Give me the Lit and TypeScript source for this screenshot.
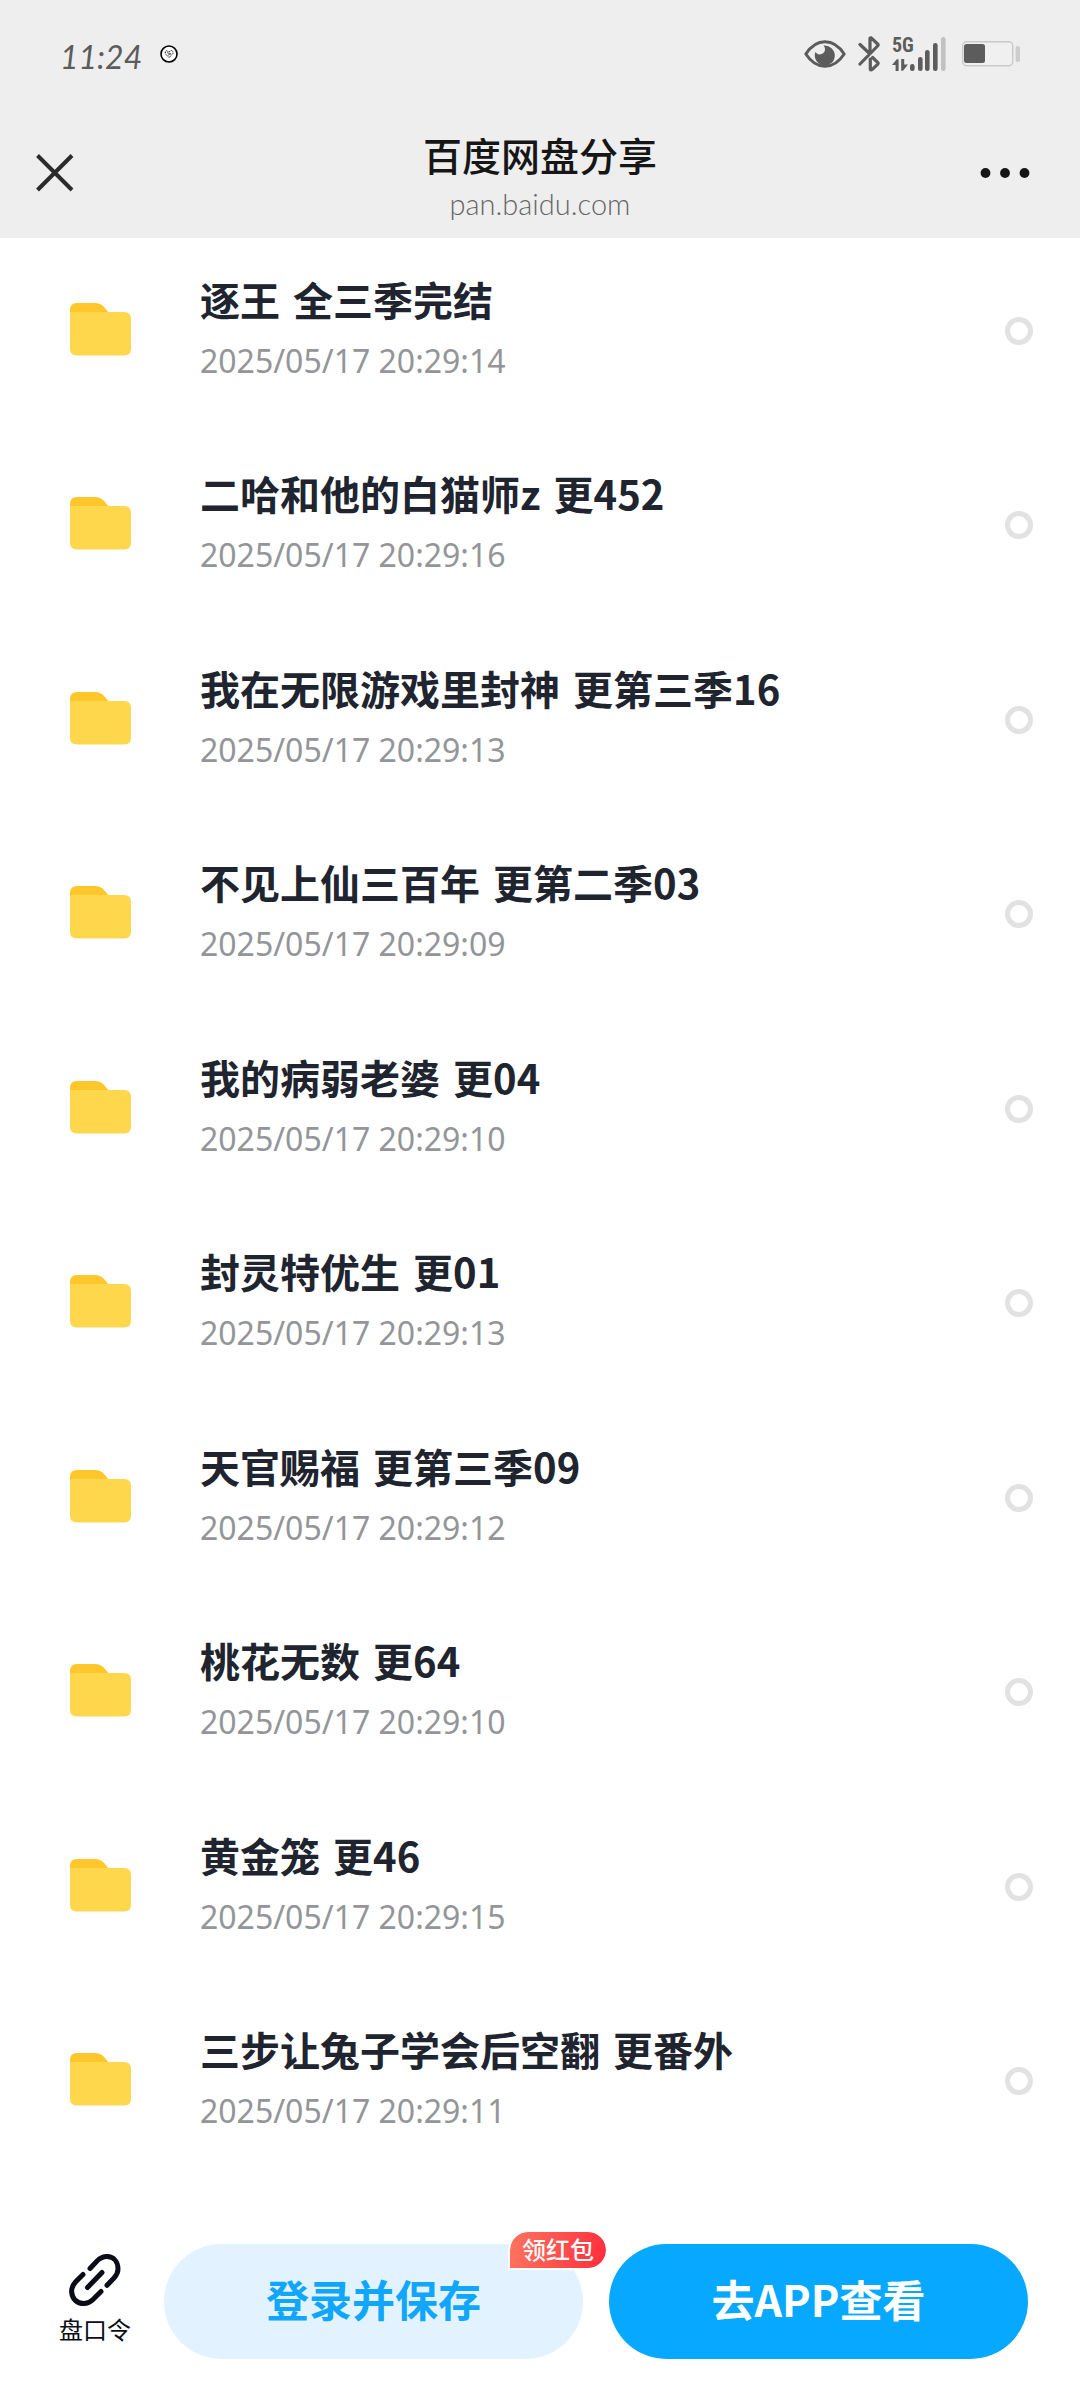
import { LitElement, html, css, svg } from "lit";
import { customElement, property } from "lit/decorators.js";

interface Folder {
  name: string;
  status: string;
  date: string;
}

const folders: Folder[] = [
  { name: "逐王", status: "全三季完结", date: "2025/05/17 20:29:14" },
  { name: "二哈和他的白猫师z", status: "更452", date: "2025/05/17 20:29:16" },
  { name: "我在无限游戏里封神", status: "更第三季16", date: "2025/05/17 20:29:13" },
  { name: "不见上仙三百年", status: "更第二季03", date: "2025/05/17 20:29:09" },
  { name: "我的病弱老婆", status: "更04", date: "2025/05/17 20:29:10" },
  { name: "封灵特优生", status: "更01", date: "2025/05/17 20:29:13" },
  { name: "天官赐福", status: "更第三季09", date: "2025/05/17 20:29:12" },
  { name: "桃花无数", status: "更64", date: "2025/05/17 20:29:10" },
  { name: "黄金笼", status: "更46", date: "2025/05/17 20:29:15" },
  { name: "三步让兔子学会后空翻", status: "更番外", date: "2025/05/17 20:29:11" },
];

@customElement("status-bar")
class StatusBar extends LitElement {
  static styles = css`
    :host {
      display: flex;
      align-items: center;
      justify-content: space-between;
      height: 108px;
      padding: 0 60px;
      color: #5c5c5c;
    }
    .left,
    .right {
      display: flex;
      align-items: center;
    }
    .left {
      gap: 18px;
    }
    .right {
      gap: 12px;
    }
    .time {
      font: italic 400 32px/40px Lato, "Noto Sans", sans-serif;
      padding-top: 6px;
    }
    .network {
      display: flex;
      align-items: flex-end;
      margin-right: 4px;
    }
    .carrier {
      display: flex;
      flex-direction: column;
      align-items: flex-start;
      gap: 6px;
      width: 18px;
    }
    .gen {
      font: 700 20px/16px "Liberation Sans Narrow", "Roboto Condensed", "Liberation Sans", sans-serif;
    }
    svg {
      display: block;
    }
  `;

  render() {
    return html`
      <div class="left">
        <span class="time">11:24</span>
        <svg width="18" height="18" viewBox="0 0 18 18" aria-hidden="true">
          <circle cx="9" cy="9" r="8" fill="#fff" stroke="#000" stroke-width="1.6" />
          <path d="M9 12.6 5.3 8.8V6.6L6.6 5.6 9 7l2.4-1.6 1.5 1.2v2z" fill="none" stroke="#222" stroke-width="1" stroke-dasharray="1.4 .6" />
          <path d="M7 7.6l4 1.6M8 10.4l3-2" stroke="#333" stroke-width=".8" />
        </svg>
      </div>
      <div class="right">
        <svg width="42" height="28" viewBox="0 0 42 28" aria-hidden="true">
          <path d="M1.8 14C7 6 14 1.7 21 1.7S35 6 40.2 14C35 22 28 26.3 21 26.3S7 22 1.8 14z" fill="none" stroke="#5c5c5c" stroke-width="3" stroke-linejoin="round" />
          <path d="M19.5 5.6A10 10 0 1 1 11.4 12 5.2 5.2 0 1 0 19.5 5.6z" fill="#5c5c5c" />
          <circle cx="21" cy="21" r="5" fill="#5c5c5c" />
        </svg>
        <svg width="22" height="36" viewBox="0 0 22 36" aria-hidden="true">
          <path d="M2 8.5 11.5 17.500M2 28 19.600 10q1-1 0-2L14 2.600Q12.600 1.400 12 2.200V17.500M12.300 23v10.300q.5 1.200 2 0l5.300-5q1-1 0-2l-5-4.800" fill="none" stroke="#5c5c5c" stroke-width="3.2" stroke-linecap="round" stroke-linejoin="round" />
        </svg>
        <div class="network">
          <div class="carrier">
            <span class="gen">5G</span>
            <svg width="16" height="12" viewBox="0 0 16 12" aria-hidden="true">
              <path d="M6.6 12H3.6V6H0L4.8.2h1.8zM9.200 0h3v5.600H16L11 11.800H9.200z" fill="#5c5c5c" />
            </svg>
          </div>
          <svg width="36" height="34" viewBox="0 0 36 34" aria-hidden="true">
            ${[
              [0, 27],
              [8, 20],
              [15, 13],
              [23, 6],
              [31, 0],
            ].map(
              ([x, y], i) => svg`<rect x=${x} y=${y} width="4.6" height=${34 - y} rx="2.2" fill=${i === 4 ? "#c1c1c1" : "#5c5c5c"} />`
            )}
          </svg>
        </div>
        <svg width="58" height="26" viewBox="0 0 58 26" aria-hidden="true">
          <rect x=".7" y=".7" width="50" height="24" rx="4" fill="#f0f0f0" stroke="#c9c9c9" stroke-width="1.4" />
          <rect x="2" y="3" width="21" height="19" rx="2.5" fill="#5c5c5c" />
          <rect x="53.6" y="5" width="4.4" height="16" rx="2" fill="#cdcdcd" />
        </svg>
      </div>
    `;
  }
}

@customElement("page-nav")
class PageNav extends LitElement {
  static styles = css`
    :host {
      display: grid;
      grid-template-columns: 120px 1fr 120px;
      height: 130px;
      color: #161616;
    }
    button {
      display: flex;
      align-items: center;
      height: 130px;
      border: 0;
      padding: 0;
      background: none;
      cursor: pointer;
    }
    .close {
      padding-left: 36px;
    }
    .more {
      justify-content: flex-end;
      padding-right: 50px;
    }
    .heading {
      display: flex;
      flex-direction: column;
      align-items: center;
      padding-top: 20px;
    }
    .title {
      margin: 0;
      font: 500 39px/52px "Noto Sans CJK SC", sans-serif;
    }
    .host {
      font: 300 29px/48px Lato, "Noto Sans", sans-serif;
      color: #666;
    }
  `;

  render() {
    return html`
      <button class="close" aria-label="关闭">
        <svg width="38" height="38" viewBox="0 0 38 38"><path d="M1.5 1.5l34.5 34.5M36 1.5L1.5 36" stroke="#2b2b2b" stroke-width="4" /></svg>
      </button>
      <div class="heading">
        <h1 class="title">百度网盘分享</h1>
        <span class="host">pan.baidu.com</span>
      </div>
      <button class="more" aria-label="更多">
        <svg width="50" height="10" viewBox="0 0 50 10" fill="#161616"><circle cx="5.5" cy="5" r="4.9" /><circle cx="25" cy="5" r="4.9" /><circle cx="44.5" cy="5" r="4.9" /></svg>
      </button>
    `;
  }
}

@customElement("folder-row")
class FolderRow extends LitElement {
  @property({ attribute: false }) folder!: Folder;

  static styles = css`
    :host {
      display: flex;
      align-items: center;
      height: 120px;
      padding: 0 47px 0 70px;
    }
    .icon {
      flex: none;
      margin-right: 69px;
    }
    .text {
      flex: 1;
      min-width: 0;
      display: flex;
      flex-direction: column;
      gap: 4px;
    }
    .name {
      font: 700 40px/56px "Noto Sans CJK SC", sans-serif;
      color: #20242f;
      text-decoration: none;
      white-space: nowrap;
    }
    .status {
      margin-left: 4px;
    }
    .date {
      font: 400 32px/60px "Noto Sans", sans-serif;
      color: #939599;
    }
    .pick {
      appearance: none;
      box-sizing: border-box;
      flex: none;
      width: 28px;
      height: 28px;
      margin: 0;
      border: 5px solid #e2e2e2;
      border-radius: 50%;
      background: #fff;
    }
    .pick:checked {
      border-color: #09aaff;
    }
  `;

  render() {
    const { name, status, date } = this.folder;
    return html`
      <svg class="icon" width="61" height="56" viewBox="0 0 61 56" aria-hidden="true">
        <path d="M0 20V7Q0 0 7 0H25Q31 0 34.5 4.5L40 11V20z" fill="#ffc72b" />
        <path d="M0 9H54Q61 9 61 16V45.500Q61 52.500 54 52.500H7Q0 52.500 0 45.500z" fill="#ffd74d" />
      </svg>
      <div class="text">
        <a class="name" id="name" href="#">${name} <span class="status">${status}</span></a>
        <time class="date">${date}</time>
      </div>
      <input class="pick" type="checkbox" aria-labelledby="name" />
    `;
  }
}

@customElement("action-bar")
class ActionBar extends LitElement {
  static styles = css`
    :host {
      box-sizing: border-box;
      display: flex;
      align-items: flex-start;
      height: 210px;
      padding: 66px 52px 0 59px;
      font-family: "Noto Sans CJK SC", sans-serif;
    }
    button {
      border: 0;
      padding: 0;
      font-family: inherit;
      cursor: pointer;
    }
    .code {
      display: flex;
      flex-direction: column;
      align-items: center;
      gap: 6px;
      margin: 10px 33px 0 0;
      background: none;
      color: #0a0c18;
      font-size: 24px;
      line-height: 34px;
    }
    .actions {
      flex: 1;
      display: grid;
      grid-template-columns: 1fr 1fr;
      gap: 26px;
    }
    .action {
      position: relative;
      height: 115px;
      padding-bottom: 8px;
      border-radius: 58px;
      font-size: 43px;
      font-weight: 700;
      line-height: 60px;
    }
    .save {
      background: #e2f3ff;
      color: #10a6fb;
    }
    .open {
      background: #07a8ff;
      color: #fff;
    }
    .badge {
      position: absolute;
      top: -14px;
      right: -25px;
      padding: 0 12px 2px;
      border: 2px solid #fff;
      border-radius: 20px 20px 20px 0;
      background: linear-gradient(100deg, #ff7560, #ff2d3c) padding-box;
      color: #fff;
      font-size: 24px;
      font-weight: 500;
      line-height: 34px;
    }
  `;

  render() {
    return html`
      <button class="code">
        <svg width="52" height="52" viewBox="0 0 52 52" fill="none" stroke="#0a0c18" stroke-width="5" stroke-linecap="round" aria-hidden="true">
          <path d="M21 14.500 28 7Q33 2.500 38 2.600C45 2.800 49 8 49 15Q49 19.500 45 24L38 31.300" />
          <path d="M14 20.500 6.500 28Q2.600 32.500 2.600 37.500C3 45 8 49.500 15 49.500Q20 49.500 24 45.500L32 37.500" />
          <path d="M18.500 33.500 33 18.500" />
        </svg>
        <span>盘口令</span>
      </button>
      <div class="actions">
        <button class="action save">登录并保存<span class="badge">领红包</span></button>
        <button class="action open">去APP查看</button>
      </div>
    `;
  }
}

@customElement("app-root")
class AppRoot extends LitElement {
  static styles = css`
    :host {
      display: flex;
      flex-direction: column;
      min-height: 100vh;
      background: #fff;
    }
    .top {
      background: #eee;
    }
    .list {
      flex: 1;
      display: flex;
      flex-direction: column;
      justify-content: space-between;
      padding: 33px 0 37px;
    }
  `;

  render() {
    return html`
      <header class="top">
        <status-bar></status-bar>
        <page-nav></page-nav>
      </header>
      <main class="list">${folders.map((f) => html`<folder-row .folder=${f}></folder-row>`)}</main>
      <action-bar></action-bar>
    `;
  }
}
